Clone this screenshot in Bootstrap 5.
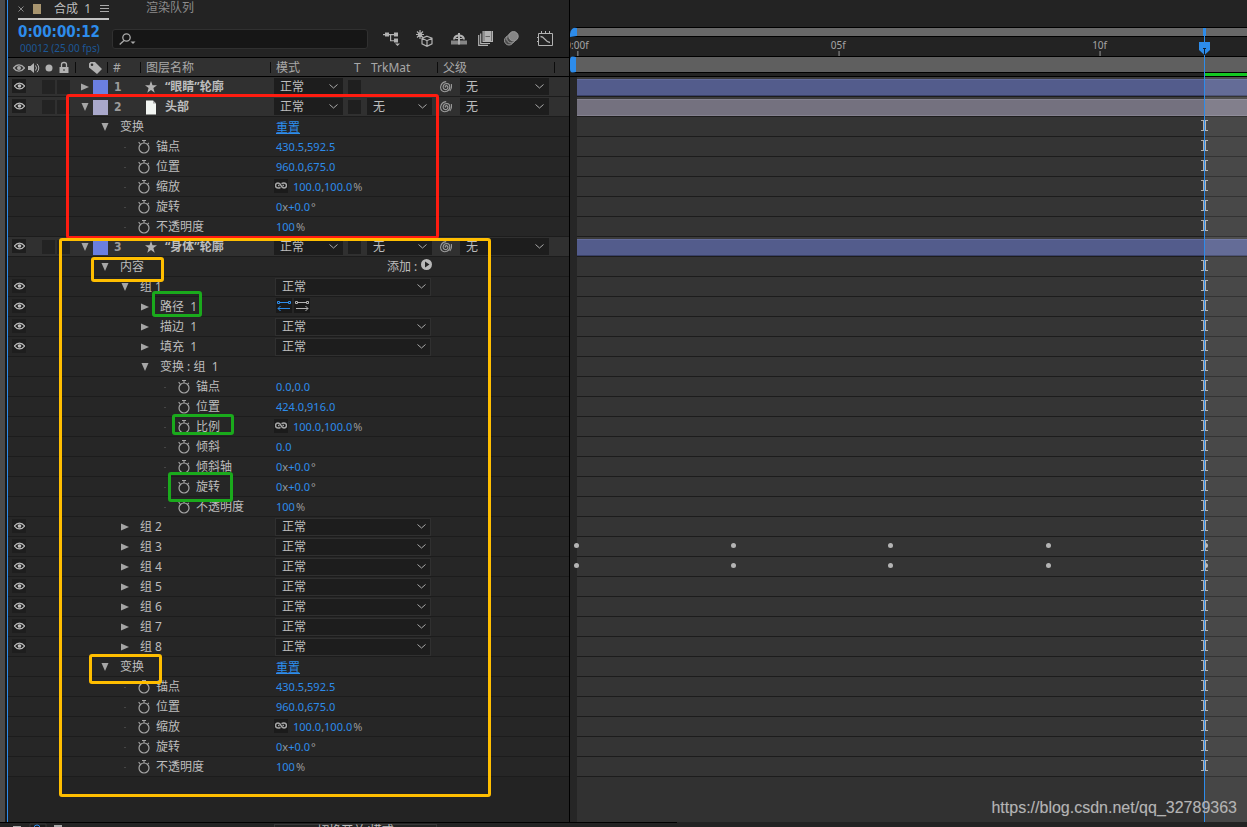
<!DOCTYPE html>
<html lang="zh-CN" data-bs-theme="dark">
<head>
<meta charset="utf-8">
<meta name="viewport" content="width=device-width, initial-scale=1">
<title>合成 1</title>
<link href="https://cdn.jsdelivr.net/npm/bootstrap@5.3.0/dist/css/bootstrap.min.css" rel="stylesheet">
<style>
:root{--blue:#2d8ceb;--txt:#bdbdbd;--line:#1c1c1c}
body{background:#232323;color:var(--txt);font:12px/16px "Noto Sans","Noto Sans CJK SC",sans-serif}
button{background:none;border:0;padding:0;color:inherit;display:flex;align-items:center;justify-content:center}
svg{display:block;overflow:visible}
a{color:inherit}
.edge{flex:0 0 8px;background:linear-gradient(90deg,#4b4b4b 5px,#1a1a1a 5px 7px,var(--blue) 7px)}
.layers{flex:0 0 562px;border-right:1px solid #000}
.tabs{height:20px;padding-left:10px}
.tab-on{width:91px;height:20px;border-bottom:2px solid #c4c4c4;gap:9px;padding-left:0}
.tab-on i{width:10px;height:10px;background:#a8956f}
.tab-off{margin-left:37px;color:#8c8c8c}
.tools{height:37px;padding-left:10px}
.clock{width:94px}
.timecode{font:bold 15px/17px "DejaVu Sans Condensed","DejaVu Sans",sans-serif;color:var(--blue)}
.frames{font-size:10px;line-height:14px;color:#1d5796;padding-left:2px}
.find{width:256px;height:20px;margin-top:9px;background:#161616;border:1px solid #303030;border-radius:3px;padding-left:6px}
.find input{background:none;border:0;outline:0;min-width:0}
.toolset{margin-left:15px}
.gap-a{margin-left:16px}.gap-b{margin-left:18px}.gap-c{margin-left:11px}
.heads{height:20px;border-top:1px solid #000;border-bottom:1px solid #000;background:#313131;display:grid;grid-template-columns:68px 32px 33px 130px 167px 117px 1fr;color:#a8a8a8}
.heads>div{display:flex;align-items:center;position:relative;white-space:nowrap;padding-top:1px;padding-left:5px}
.heads>div:not(:last-child)::after{content:"";position:absolute;right:0;top:4px;height:11px;width:1px;background:#0c0c0c}
.av-icons{gap:3px}
.line-row{display:grid;grid-template-columns:68px 199px 1fr;height:20px;border-bottom:1px solid var(--line);background:#262626;white-space:nowrap}
.line-row>div{display:flex;align-items:center;min-width:0}
.line-row>div:nth-child(2){padding-top:1px}
.line-row.layer{background:#303030}
.av{padding-left:4px}
.cellbox{width:13px;height:14px;background:#1f1f1f;flex:none}
.layer .av .cellbox{background:#232323}
.eye-btn{width:14px;height:14px;background:#1e1e1e;margin-bottom:2px;flex:none}
.twirl{width:13px;height:12px;flex:none;color:#a6a6a6}
.label{margin-left:9px}
.d0{padding-left:2px}.d1{padding-left:22px}.d2{padding-left:42px}.d3{padding-left:62px}
.p2{padding-left:48px}.p4{padding-left:88px}
.p2::before,.p4::before{content:"";width:2px;height:1px;background:#454545;margin-right:11px}
.swatch{width:15px;height:15px;margin-left:2px}
.lnum{width:37px;padding-left:6px;font:bold 12px/16px "DejaVu Sans Condensed",sans-serif;color:#9b9b9b}
.lname{font-weight:bold;padding-left:8px}
.watch{width:14px;height:14px;margin-right:5px;flex:none;color:#a6a6a6}
.figures{font-size:11px;padding-left:1px;color:#999}
.figures b,.figures a{font-weight:normal;color:var(--blue)}
.figures a{font-size:12px;padding-top:2px}
.chain{width:14px;height:14px;background:#1b1b1b;margin:0 5px 2px -2px;color:#a6a6a6}
.adder{margin-left:111px;font-size:12px;color:var(--txt)}
.dir{width:16px;height:15px;background:#191919;margin:0 2px 2px 0;color:#b2b2b2}
.dir.on{color:var(--blue)}
select{appearance:none;height:17px;border:1px solid #1d1d1d;border-radius:0;color:var(--txt);font-size:12px;line-height:15px;padding:0 0 0 6px;outline:0;background:#1d1d1d url("data:image/svg+xml,%3Csvg xmlns='http://www.w3.org/2000/svg' width='9' height='5'%3E%3Cpath d='M.5.5 4.500 4 8.500.5' fill='none' stroke='%23aaa'/%3E%3C/svg%3E") no-repeat right 4px center}
.s-mode{width:69px;margin-left:-1px}.s-matte{width:65px}.s-parent{width:89px}
.matte{width:65px}
.t-box{margin:0 6px 0 5px}
.whip{width:28px;color:#9b9b9b}
.layer select{padding-left:5px}
.s-wide{width:156px;height:18px;border-color:#303030;margin-left:-1px}
.track{min-width:0;position:relative}
.ruler{height:77px;padding-top:27px}
.nav-strip{height:10px;border:1px solid #000;border-width:1px 0;background:#686868;border-left:7px solid var(--blue);border-top-left-radius:7px}
.scale{height:19px;position:relative;margin-left:7px;font-size:10px;line-height:16px;color:#a5a5a5}
.scale span{position:absolute;top:0;transform:translateX(-50%)}
.scale span::after{content:"";position:absolute;left:50%;top:14px;width:1px;height:5px;background:#999}
.work{height:17px;border:1px solid #000;border-width:1px 0;background:#5f5f5f;border-left:6px solid var(--blue);border-top-left-radius:4px;border-bottom-left-radius:4px}
.cache{height:4px;border-bottom:1px solid #000;background:#232323}
.lanes{background:linear-gradient(90deg,#262626 7px,#313131 7px)}
.lane{height:20px;border-bottom:1px solid var(--line);margin-left:7px;background:#343434;position:relative}
.lane.layer{background:#3b3b3b;padding-top:2px}
.bar{height:17px;background:#535c8c;border-top:1px solid #626b9c;border-bottom:1px solid #3a4168}
.bar.gray{background:#74717f;border-color:#84818f #55535f}
.beam{position:absolute;left:93.6%;top:3px;width:7px;height:11px;margin-left:-3px;color:#b0b0b0}
.key{position:absolute;top:6px;width:5px;height:5px;margin-left:-3px;border-radius:50%;background:#b4b4b4}
.over{position:absolute;left:7px;right:0;top:0;bottom:0;pointer-events:none;z-index:2}
.after{position:absolute;left:93.6%;right:0;top:77px;bottom:0;background:rgba(255,255,255,.1)}
.after::before{content:"";position:absolute;left:0;right:0;top:-4px;height:3px;background:#14c822}
.head-line{position:absolute;left:93.6%;top:28px;bottom:0;width:1px;background:var(--blue)}
.head-line::before{content:"";position:absolute;left:-1px;top:0;width:3px;height:8px;background:var(--blue)}
.head-line svg{position:absolute;left:-5px;top:14px}
.mark-box{position:absolute;border:3px solid #ffbe00;border-radius:3px;pointer-events:none;z-index:3}
.red{border-color:#ff1c10}.green{border-color:#1aaa1c}
.m1{left:58px;top:94px;width:373px;height:145px}
.m2{left:51px;top:238px;width:432px;height:559px}
.m3{left:83px;top:257px;width:73px;height:25px}
.m4{left:144px;top:291px;width:50px;height:26px}
.m5{left:164px;top:414px;width:62px;height:21px}
.m6{left:160px;top:472px;width:73px;height:30px}
.m6{width:65px}
.m7{left:81px;top:654px;width:73px;height:30px}
.foot{flex:0 0 5px;overflow:hidden}
.foot-in{width:677px;border-top:1px solid #000;height:24px;padding-left:13px}
.modes{width:163px;height:20px;border:1px solid #383838;margin-left:212px;margin-top:1px}
.water{position:absolute;right:10px;bottom:9px;z-index:4;font:16px/20px "Liberation Sans",sans-serif;color:#b4b4b4;text-shadow:0 0 1px #555}
</style>
</head>
<body>
<svg width="0" height="0" class="position-absolute" aria-hidden="true">
<symbol id="eye" viewBox="0 0 12 8"><path d="M.5 4Q3 .8 6 .8T11.500 4Q9 7.200 6 7.200T.5 4z" fill="none" stroke="currentColor" stroke-width="1.300"/><circle cx="6" cy="4" r="2" fill="currentColor"/></symbol>
<symbol id="right" viewBox="0 0 8 8"><path d="M0 .5 8 4 0 7.500z" fill="currentColor"/></symbol>
<symbol id="down" viewBox="0 0 8 8"><path d="M.5 0h7L4 8z" fill="currentColor"/></symbol>
<symbol id="watch" viewBox="0 0 14 14"><circle cx="7" cy="8" r="5" fill="none" stroke="currentColor" stroke-width="1.200"/><path d="M5 .5h4M7 .5V3M1.600 2.200l1.600 1.600M11.800 2.800l-1 1" fill="none" stroke="currentColor" stroke-width="1.100"/></symbol>
<symbol id="spiral" viewBox="0 0 12 12"><path d="M5.500 6.500C4.800 5.500 6 4 7.200 5c1.600 1.400 0 4-2.200 3.500C1.800 7.700 3 2.500 6.700 2.500c4.300.3 3.800 6.500.3 7.800C3 11.800.3 9 .6 6 1 2.800 3.200.8 6.200.6M11.300 3c.6 3 .2 5-1.500 7" fill="none" stroke="currentColor" stroke-width="1.100"/></symbol>
<symbol id="chain" viewBox="0 0 12 7"><path d="M5.500 5.300Q4.500 6 3 6a2.400 2.400 0 0 1 0-5q2 0 3 2.500T9 6a2.400 2.400 0 0 0 0-5Q7.500 1 6.500 1.700M3 3.500h1.500M7.500 3.500H9" fill="none" stroke="currentColor" stroke-width="1.500"/></symbol>
<symbol id="star" viewBox="0 0 12 12"><path d="m6 0 1.500 4.300H12L8.400 7l1.300 4.700L6 9l-3.700 2.700L3.600 7 0 4.300h4.500z" fill="#b2b2b2"/></symbol>
<symbol id="page" viewBox="0 0 12 14"><path d="M1 0h7l3 3v11H1z" fill="#f2f5f2"/><path d="M8 0v3h3z" fill="#aaa"/></symbol>
<symbol id="beam" viewBox="0 0 7 11"><path d="M0 .5h7M0 10.500h7M2.500 0v11M4.500 0v11" fill="none" stroke="currentColor"/></symbol>
</svg>

<div class="vh-100 d-flex flex-column overflow-hidden position-relative">
<main class="d-flex flex-fill overflow-hidden">
  <div class="edge"></div>
  <section class="layers position-relative">
    <div class="tabs d-flex">
      <div class="tab-on d-flex align-items-center text-nowrap">
        <svg width="6" height="6" viewBox="0 0 6 6" stroke="#888"><path d="m.5.5 5 5m0-5-5 5"/></svg>
        <i></i><span class="flex-fill ps-1">合成&nbsp; 1</span>
        <svg width="9" height="8" viewBox="0 0 9 8" stroke="#aaa"><path d="M0 .5h9M0 3.500h9M0 6.500h9"/></svg>
      </div>
      <a class="tab-off text-decoration-none" href="#">渲染队列</a>
    </div>
    <div class="tools d-flex">
      <div class="clock pt-1 text-nowrap"><div class="timecode">0:00:00:12</div><div class="frames">00012 (25.00 fps)</div></div>
      <label class="find d-flex align-items-center">
        <svg width="18" height="13" viewBox="0 0 18 13" fill="none" stroke="#aaa" stroke-width="1.300"><circle cx="7.500" cy="4.500" r="3.700"/><path d="M5 7.500.7 11.500"/><path d="M11.500 8.500h5L14 11z" fill="#aaa" stroke="none"/></svg>
        <input class="flex-fill" type="text" aria-label="搜索">
      </label>
      <div class="toolset d-flex align-items-center" role="toolbar">
        <button aria-label="流程图"><svg width="17" height="16" viewBox="0 0 17 16" fill="#b2b2b2"><path d="M0 3h2V1.500h4V3h5V1.500h4v4h-4V4.200H8.200v5H11V7.500h4v4h-4v-1.200H7v-6H6v1.200H2V4.200H0zM12 12.500h5L14.500 15z"/></svg></button>
        <button class="gap-a" aria-label="3D 草图"><svg width="17" height="17" viewBox="0 0 17 17" fill="none" stroke="#b2b2b2" stroke-width="1.200"><path d="M4 0v9M0 4.500h8M1 1.500l6 6M7 1.500l-6 6"/><circle cx="4" cy="4.500" r="1.500" fill="#b2b2b2"/><path d="m11 6.200 5 2v5.600l-5 2.500-5-2.500V8.200zM6 8.200l5 2.500 5-2.500M11 10.700v5.500" fill="#232323"/></svg></button>
        <button class="gap-b" aria-label="隐藏图层"><svg width="16" height="14" viewBox="0 0 16 14"><path d="M0 8.500h16v4H0z" fill="#858585"/><path d="M2 7.500Q2.500 3 7 2.500V1h2v1.500q4.500.5 5 5h-2Q11.500 5 9 4.500V12.500H7v-8Q4.500 5 4 7.500z" fill="#b2b2b2"/><path d="M4.500 6.500h7" stroke="#b2b2b2"/></svg></button>
        <button class="gap-c" aria-label="帧混合"><svg width="15" height="15" viewBox="0 0 15 15"><path d="M.7 4v10.300H10M2.700 2.500V12.500H12" stroke="#b2b2b2" stroke-width="1.200" fill="none"/><path d="M4.500 0H15v11H4.500z" fill="#b2b2b2"/><path d="M6 .5v10M13.500.5v10" stroke="#333" stroke-dasharray="1 1"/><path d="M7.500 5.500H12" stroke="#666"/></svg></button>
        <button class="gap-c" aria-label="运动模糊"><svg width="15" height="15" viewBox="0 0 15 15" fill="#4a4a4a" stroke="#9c9c9c"><circle cx="5" cy="9.500" r="4.500"/><circle cx="7.200" cy="7.500" r="4.500"/><circle cx="9.500" cy="5.300" r="4.700" fill="#858585"/></svg></button>
        <button class="gap-b" aria-label="图表编辑器"><svg width="16" height="16" viewBox="0 0 16 16" fill="none" stroke="#b2b2b2"><path d="M1.500 2.500h14v12h-14zM4.500 2V0M8.500 2V0M12.500 2V0M0 6.500h2M0 10.500h2"/><path d="M3.500 5.500c4.500 0 4 5.500 9.500 6" stroke-width="1.300"/></svg></button>
      </div>
    </div>
    <div class="heads">
      <div class="av-icons">
        <svg width="12" height="8"><use href="#eye"/></svg>
        <svg width="12" height="10" viewBox="0 0 12 10"><path d="M0 3h2.500L6 0v10L2.500 7H0z" fill="#b2b2b2"/><path d="M7.500 2.500q2 2.500 0 5M9 .8q3.600 4.200 0 8.400" stroke="#b2b2b2" fill="none"/></svg>
        <svg width="13" height="8" viewBox="0 0 13 8"><circle cx="6" cy="4" r="3.500" fill="#b2b2b2"/></svg>
        <svg width="10" height="11" viewBox="0 0 10 11"><path d="M.5 5h9v6h-9z" fill="#b2b2b2"/><path d="M2.500 5V2.500a2.500 2 0 0 1 5 0V5" fill="none" stroke="#b2b2b2" stroke-width="1.300"/><path d="M5 7v2" stroke="#333"/></svg>
      </div>
      <div><svg class="ms-2" width="13" height="12" viewBox="0 0 13 12"><path fill-rule="evenodd" d="M0 1.500 1.500 0H6l7 7-5 5-8-6.500zM3 1.500a1.300 1.300 0 1 0 0 2.600 1.300 1.300 0 0 0 0-2.600z" fill="#b2b2b2"/></svg></div>
      <div>#</div>
      <div>图层名称</div>
      <div>模式<span class="ms-auto" style="width:17px">T</span><span style="width:67px">TrkMat</span></div>
      <div>父级</div>
      <div></div>
    </div>
    <div id="rows"></div>
    <div class="mark-box red m1"></div><div class="mark-box m2"></div><div class="mark-box m3"></div>
    <div class="mark-box green m4"></div><div class="mark-box green m5"></div><div class="mark-box green m6"></div><div class="mark-box m7"></div>
  </section>
  <section class="track flex-fill d-flex flex-column overflow-hidden">
    <div class="ruler">
      <div class="nav-strip"></div>
      <div class="scale"><span style="left:0">0:00f</span><span style="left:39%">05f</span><span style="left:78%">10f</span></div>
      <div class="work"></div>
      <div class="cache"></div>
    </div>
    <div id="lanes" class="lanes flex-fill"></div>
    <div class="over"><div class="after"></div>
    <div class="head-line"><svg width="11" height="13" viewBox="0 0 11 13"><path d="M0 0h11v8l-5.500 5L0 8z" fill="#2d8ceb"/><path d="M4 6.500h3M5.500 6.500V13" stroke="#123"/></svg></div></div>
  </section>
</main>
<footer class="foot">
  <div class="foot-in d-flex">
    <svg width="9" height="12" viewBox="0 0 9 12"><path d="M0 3h8v8H0z" fill="#aaa"/></svg>
    <svg class="ms-2" width="16" height="14" viewBox="0 0 16 14"><path d="M0 14V1h16v13" fill="#1b1b1b" stroke="#383838"/><circle cx="7" cy="5" r="3" fill="none" stroke="#2d8ceb"/></svg>
    <svg class="ms-2" width="8" height="12" viewBox="0 0 8 12"><path d="M0 2h8v9H0z" fill="#aaa"/></svg>
    <button class="modes align-items-start lh-1">切换开关/模式</button>
  </div>
</footer>
<div class="water">https://blog.csdn.net/qq_32789363</div>
</div>

<script>
const icon = (id, w, h) => `<svg width="${w}" height="${h || w}"><use href="#${id}"/></svg>`;
const eye = `<button class="eye-btn" aria-label="显示">${icon('eye', 11, 8)}</button>`;
const pick = (cls, text, name) => `<select class="${cls}" aria-label="${name}"><option>${text}</option></select>`;
const twirl = open => `<button class="twirl" aria-label="展开">${icon(open ? 'down' : 'right', 8)}</button>`;

const layer = (n, open, color, glyph, name, matte) => ({kind: 'layer', n, html:
  `<div class="av">${eye}<span class="cellbox ms-3"></span><span class="cellbox" style="margin-left:2px"></span></div>
   <div class="d0">${twirl(open)}<span class="swatch" style="background:${color}"></span><span class="lnum">${n}</span>${glyph}<span class="lname">${name}</span></div>
   <div>${pick('s-mode', '正常', '模式')}<span class="cellbox t-box"></span>
   <span class="matte">${matte ? pick('s-matte', '无', '轨道遮罩') : ''}</span>
   <button class="whip" aria-label="父级关联器">${icon('spiral', 12)}</button>${pick('s-parent', '无', '父级')}</div>`});
const group = (d, open, name, val = '', seen = false, keys = []) => ({keys, html:
  `<div class="av">${seen ? eye : ''}</div><div class="d${d}">${twirl(open)}<span class="label">${name}</span></div><div class="figures">${val}</div>`});
const prop = (d, name, val) => ({keys: [], html:
  `<div class="av"></div><div class="p${d}"><button class="watch" aria-label="${name}关键帧">${icon('watch', 14)}</button>${name}</div><div class="figures">${val}</div>`});

const mode = pick('s-wide', '正常', '模式');
const chain = `<button class="chain" aria-label="约束比例">${icon('chain', 12, 7)}</button>`;
const reset = '<a href="#">重置</a>';
const scale = chain + '<b>100.0</b>,<b>100.0</b><span style="padding-left:1px">%</span>';
const turn = '<b>0</b>x<b>+0.0</b><span style="padding-left:1px">°</span>';
const full = '<b>100</b><span style="padding-left:1px">%</span>';
const transform = d => [
  prop(d, '锚点', '<b>430.5</b>,<b>592.5</b>'), prop(d, '位置', '<b>960.0</b>,<b>675.0</b>'),
  prop(d, '缩放', scale), prop(d, '旋转', turn), prop(d, '不透明度', full)];
const add = `<span class="adder">添加 :</span><button class="ms-1 mb-1" aria-label="添加"><svg width="11" height="11" viewBox="0 0 11 11"><circle cx="5.500" cy="5.500" r="5.500" fill="#b8b8b8"/><path d="m4 2.500 4.500 3L4 8.500z" fill="#222"/></svg></button>`;
const dir = (cls, tip) => `<button class="dir ${cls}" aria-label="路径方向"><svg width="14" height="10" viewBox="0 0 14 10" fill="none" stroke="currentColor"><path d="M.5.5h2v2h-2zM11.500.5h2v2h-2zM3 1.500h8M1 7.500h12M${tip}"/></svg></button>`;
const star = icon('star', 12);
const keyFrames = [0, 3, 6, 9, 12];

const rows = [
  layer(1, false, '#6b7fe0', star, '“眼睛”轮廓', false),
  layer(2, true, '#a9a8cb', icon('page', 12, 15), '头部', true),
  group(1, true, '变换', reset), ...transform(2),
  layer(3, true, '#6b7fe0', star, '“身体”轮廓', true),
  group(1, true, '内容', add),
  group(2, true, '组 1', mode, true),
  group(3, false, '路径&nbsp; 1', dir('on', '3.500 5 1 7.500l2.500 2.500') + dir('', '10.500 5l2.500 2.500-2.500 2.500'), true),
  group(3, false, '描边&nbsp; 1', mode, true),
  group(3, false, '填充&nbsp; 1', mode, true),
  group(3, true, '变换 : 组&nbsp; 1'),
  prop(4, '锚点', '<b>0.0</b>,<b>0.0</b>'), prop(4, '位置', '<b>424.0</b>,<b>916.0</b>'),
  prop(4, '比例', scale), prop(4, '倾斜', '<b>0.0</b>'), prop(4, '倾斜轴', turn),
  prop(4, '旋转', turn), prop(4, '不透明度', full),
  ...[2, 3, 4, 5, 6, 7, 8].map(n => group(2, false, '组 ' + n, mode, true, n === 3 || n === 4 ? keyFrames : [])),
  group(1, true, '变换', reset), ...transform(2)
];

document.getElementById('rows').innerHTML =
  rows.map(r => `<div class="line-row ${r.kind || ''}">${r.html}</div>`).join('');
document.getElementById('lanes').innerHTML = rows.map(r => r.kind
  ? `<div class="lane layer"><div class="bar ${r.n === 2 ? 'gray' : ''}"></div></div>`
  : `<div class="lane"><span class="beam">${icon('beam', 7, 11)}</span>${r.keys.map(f => `<i class="key" style="left:${f * 7.82}%"></i>`).join('')}</div>`).join('');
</script>
<script src="https://cdn.jsdelivr.net/npm/bootstrap@5.3.0/dist/js/bootstrap.bundle.min.js"></script>
</body>
</html>
